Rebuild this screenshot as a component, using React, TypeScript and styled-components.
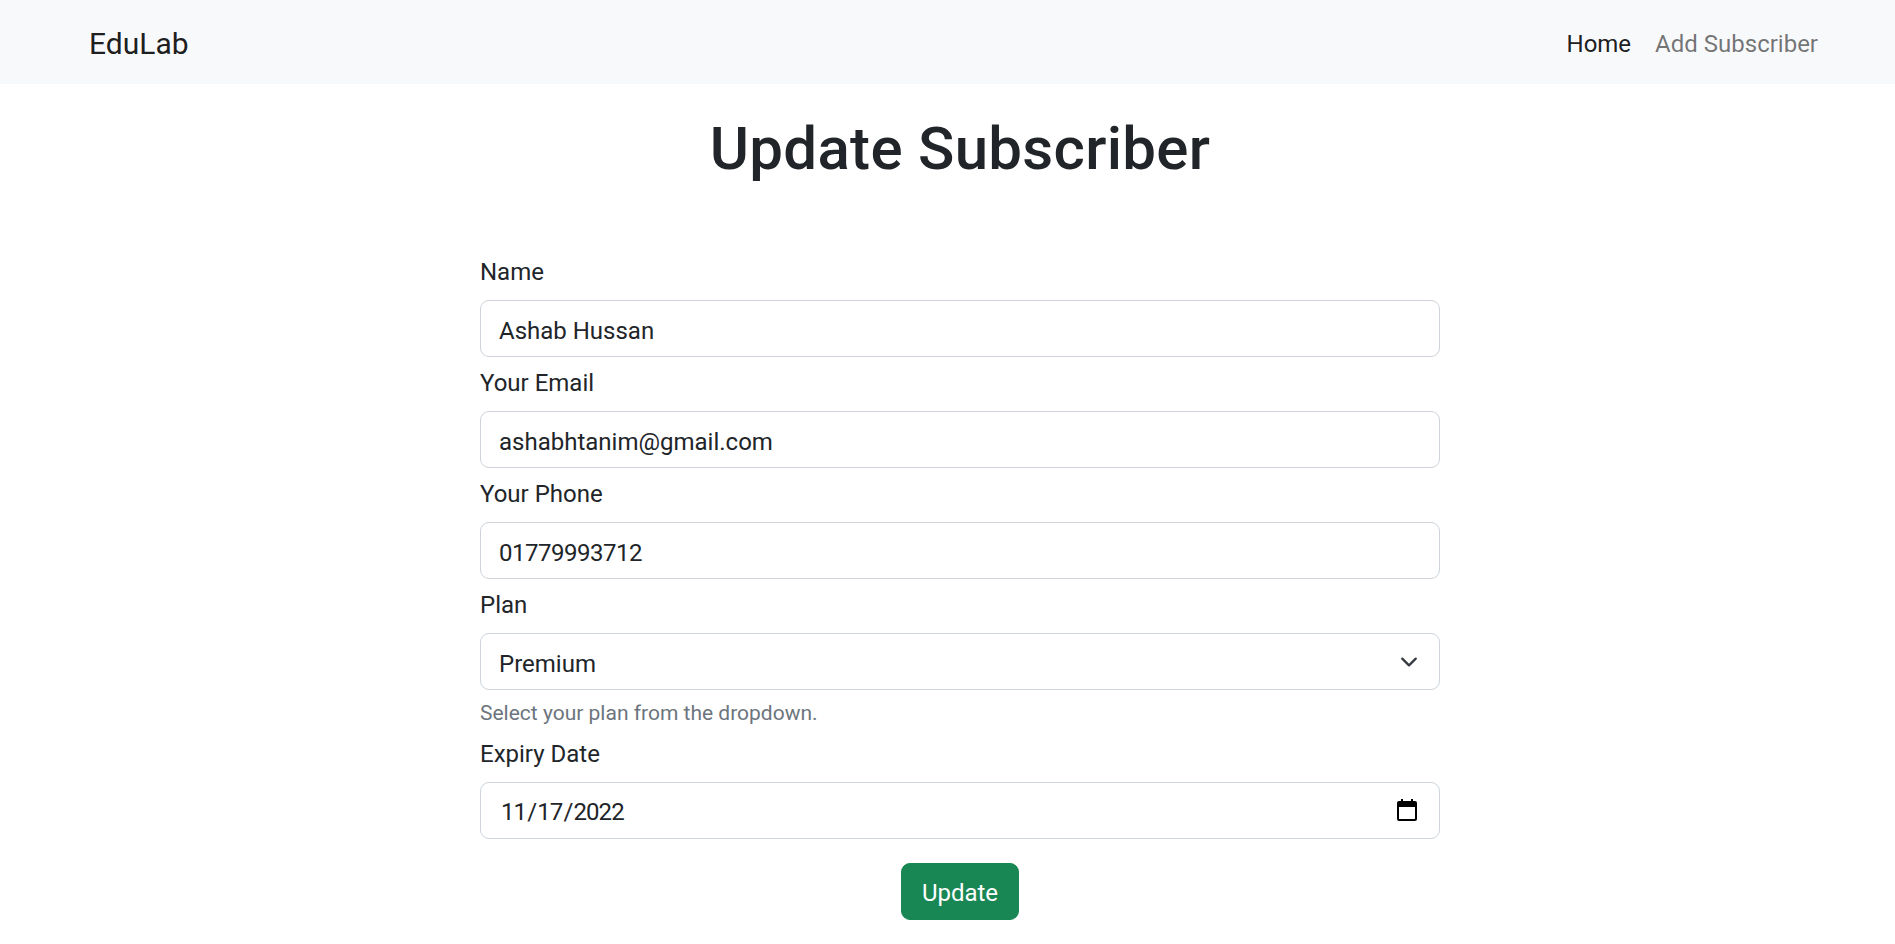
import React from "react";
import styled, { createGlobalStyle } from "styled-components";

const Global = createGlobalStyle`
  *, *::before, *::after { box-sizing: border-box; }
  body {
    margin: 0;
    font-family: Roboto, "Liberation Sans", sans-serif;
    font-size: 24px;
    line-height: 1.5;
    color: #212529;
    background: #ffffff;
  }
`;

const Navbar = styled.nav`
  display: flex;
  align-items: center;
  justify-content: space-between;
  height: 84px;
  padding: 12px 65px 12px 89px;
  background: #f8f9fa;
`;

const Brand = styled.a`
  font-size: 30px;
  line-height: 45px;
  padding: 9px 0 6px;
  color: rgba(0, 0, 0, 0.9);
  text-decoration: none;
`;

const NavLinks = styled.div`
  display: flex;
  align-items: center;
`;

const NavLink = styled.a<{ $active?: boolean }>`
  padding: 14px 12px 10px;
  line-height: 36px;
  font-size: 24px;
  color: ${(p) => (p.$active ? "rgba(0, 0, 0, 0.9)" : "rgba(0, 0, 0, 0.55)")};
  text-decoration: none;
`;

const Main = styled.main`
  display: flex;
  flex-direction: column;
  align-items: center;
  padding-left: 25px;
`;

const Title = styled.h1`
  margin: 29px 0 0;
  font-size: 60px;
  line-height: 72px;
  font-weight: 500;
  letter-spacing: 0.3px;
  color: #212529;
`;

const Form = styled.form`
  display: flex;
  flex-direction: column;
  width: 960px;
  margin-top: 67px;
`;

const Field = styled.div`
  display: flex;
  flex-direction: column;
  margin-bottom: 6px;
`;

const Label = styled.label`
  display: block;
  font-size: 24px;
  line-height: 36px;
  padding-top: 2px;
  margin-bottom: 10px;
  color: #212529;
`;

const controlStyles = `
  display: block;
  width: 100%;
  height: 57px;
  padding: 4px 18px 0;
  font-family: Roboto, "Liberation Sans", sans-serif;
  font-size: 24px;
  line-height: 36px;
  color: #212529;
  background: #ffffff;
  border: 1px solid #ced4da;
  border-radius: 9px;
  outline: none;
`;

const Input = styled.input<{ $numeric?: boolean }>`
  ${controlStyles}
  letter-spacing: ${(p) => (p.$numeric ? "-0.5px" : "normal")};
`;

const DateInput = styled.input`
  ${controlStyles}
  padding-top: 3px;
  letter-spacing: -0.9px;
  &::-webkit-calendar-picker-indicator {
    opacity: 0;
  }
  &::-webkit-datetime-edit {
    padding: 0 1px;
  }
`;

const ControlWrap = styled.div`
  position: relative;
`;

const Select = styled.select`
  ${controlStyles}
  appearance: none;
  -webkit-appearance: none;
  padding-right: 54px;
`;

const Chevron = styled.svg`
  position: absolute;
  right: 22px;
  top: 50%;
  width: 18px;
  height: 18px;
  transform: translateY(-50%);
  pointer-events: none;
`;

const CalendarIcon = styled.svg`
  position: absolute;
  right: 23px;
  top: 50%;
  width: 20px;
  height: 22px;
  transform: translateY(-50%);
  pointer-events: none;
`;

const HelpText = styled.div`
  margin-top: 6px;
  padding-top: 2px;
  height: 31.5px;
  font-size: 21px;
  line-height: 31.5px;
  color: #6c757d;
`;

const SubmitButton = styled.button`
  align-self: center;
  margin-top: 18.5px;
  height: 57px;
  padding: 2px 20px 0;
  font-family: Roboto, "Liberation Sans", sans-serif;
  font-size: 24px;
  line-height: 36px;
  color: #ffffff;
  background: #198754;
  border: 1px solid #198754;
  border-radius: 9px;
  cursor: pointer;
`;

export default function App() {
  return (
    <>
      <Global />
      <Navbar>
        <Brand href="#">EduLab</Brand>
        <NavLinks>
          <NavLink href="#" $active>
            Home
          </NavLink>
          <NavLink href="#">Add Subscriber</NavLink>
        </NavLinks>
      </Navbar>
      <Main>
        <Title>Update Subscriber</Title>
        <Form onSubmit={(e) => e.preventDefault()}>
          <Field>
            <Label htmlFor="name">Name</Label>
            <Input id="name" type="text" defaultValue="Ashab Hussan" />
          </Field>
          <Field>
            <Label htmlFor="email">Your Email</Label>
            <Input id="email" type="email" defaultValue="ashabhtanim@gmail.com" />
          </Field>
          <Field>
            <Label htmlFor="phone">Your Phone</Label>
            <Input id="phone" type="text" $numeric defaultValue="01779993712" />
          </Field>
          <Field>
            <Label htmlFor="plan">Plan</Label>
            <ControlWrap>
              <Select id="plan" defaultValue="Premium">
                <option>Basic</option>
                <option>Standard</option>
                <option>Premium</option>
              </Select>
              <Chevron viewBox="0 0 16 16" fill="none">
                <path
                  d="m2 5 6 6 6-6"
                  stroke="#343a40"
                  strokeWidth="2"
                  strokeLinecap="round"
                  strokeLinejoin="round"
                />
              </Chevron>
            </ControlWrap>
            <HelpText>Select your plan from the dropdown.</HelpText>
          </Field>
          <Field>
            <Label htmlFor="expiry">Expiry Date</Label>
            <ControlWrap>
              <DateInput id="expiry" type="date" defaultValue="2022-11-17" />
              <CalendarIcon viewBox="0 0 20 22" fill="none">
                <rect x="1" y="3" width="18" height="18" rx="1" stroke="#000" strokeWidth="2" />
                <rect x="1" y="3" width="18" height="5" fill="#000" />
                <rect x="4" y="0" width="2" height="4" fill="#000" />
                <rect x="14" y="0" width="2" height="4" fill="#000" />
              </CalendarIcon>
            </ControlWrap>
          </Field>
          <SubmitButton type="submit">Update</SubmitButton>
        </Form>
      </Main>
    </>
  );
}
